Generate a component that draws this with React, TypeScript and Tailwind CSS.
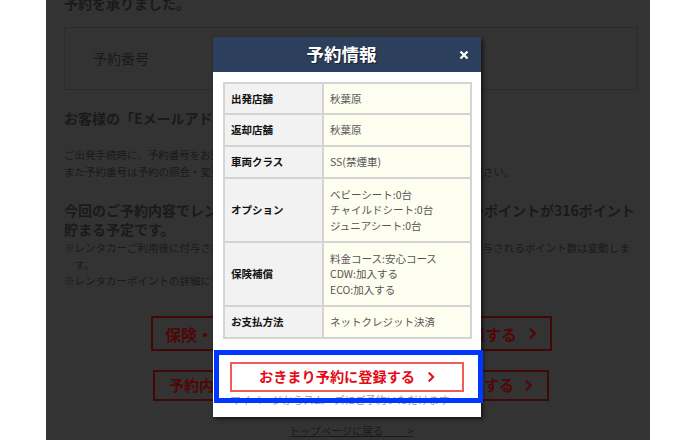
import React from 'react';

type Row = { label: string; values: string[]; height: string };

const rows: Row[] = [
  { label: '出発店舗', values: ['秋葉原'], height: 'h-[31px]' },
  { label: '返却店舗', values: ['秋葉原'], height: 'h-[32px]' },
  { label: '車両クラス', values: ['SS(禁煙車)'], height: 'h-[32px]' },
  { label: 'オプション', values: ['ベビーシート:0台', 'チャイルドシート:0台', 'ジュニアシート:0台'], height: 'h-[64px]' },
  { label: '保険補償', values: ['料金コース:安心コース', 'CDW:加入する', 'ECO:加入する'], height: 'h-[64px]' },
  { label: 'お支払方法', values: ['ネットクレジット決済'], height: 'h-[32px]' },
];

const Chevron = ({ className }: { className: string }) => (
  <svg viewBox="0 0 8 12" className={className} fill="none">
    <polyline points="1.5,1.5 6,6 1.5,10.5" stroke="currentColor" strokeWidth="2.4" strokeLinecap="square" />
  </svg>
);

// 背景のページ（オーバーレイで暗くなっている）
const BackgroundPage = () => (
  <div className="mx-[46px] h-full bg-[#333333] pl-[18px] pr-[12px] text-[#1a1a1a] overflow-hidden">
    <h1 className="-mt-[7px] text-[14px] leading-[20px] font-bold">予約を承りました。</h1>

    <div className="mt-[14px] h-[63px] border border-[#2b2b2b] flex items-center pl-[28px]">
      <span className="text-[14px]">予約番号</span>
    </div>

    <p className="mt-[18px] text-[14px] leading-[20px] font-bold">お客様の「Eメールアドレス」に確認メールを送信しました。</p>

    <div className="mt-[19px] text-[10.5px] leading-[16.6px] whitespace-nowrap">
      <p>ご出発手続時に、予約番号をお知らせください。</p>
      <p>また予約番号は予約の照会・変更・キャンセル時に必要になるので、大切に保管してください。</p>
    </div>

    <div className="mt-[21px] text-[14px] leading-[18.4px] font-bold whitespace-nowrap">
      <p>今回のご予約内容でレンタカーをご利用いただいた場合レンタカーポイントが316ポイント</p>
      <p>貯まる予定です。</p>
    </div>

    <div className="mt-[2px] text-[10.5px] leading-[16.7px] whitespace-nowrap">
      <p>※レンタカーご利用後に付与されるポイントは、ご利用内容の変更等によって、実際に付与されるポイント数は変動しま</p>
      <p className="pl-[10.5px]">す。</p>
      <p>※レンタカーポイントの詳細についてはこちらをご確認ください。</p>
    </div>

    <div className="mt-[26px] flex flex-col items-center">
      <div className="w-[401px] h-[35px] border-2 border-[#420808] flex items-center justify-center gap-[12px] text-[#4e0808]">
        <span className="text-[16px] font-bold whitespace-nowrap text-[#4e0808]">保険・オプションを含めおきまり予約に登録する</span>
        <Chevron className="w-[8px] h-[11px]" />
      </div>
      <div className="mt-[19px] w-[396px] h-[31px] border-2 border-[#420808] flex items-center justify-center gap-[11px] text-[#4e0808]">
        <span className="text-[15px] font-bold whitespace-nowrap text-[#4e0808]">予約内容を変えずそのままおきまり予約に登録する</span>
        <Chevron className="w-[8px] h-[11px]" />
      </div>
      <p className="mt-[22px] text-[10.5px] leading-[16px] underline whitespace-pre">トップページに戻る{'\u3000\u3000 >'}</p>
    </div>
  </div>
);

const ReservationModal = () => (
  <div className="absolute left-[213px] top-[37px] w-[268px] bg-white shadow-[2px_2px_4px_rgba(0,0,0,0.6)]">
    <div className="relative h-[35px] bg-[#2c3f5c] flex items-center justify-center pr-[11px]">
      <h2 className="text-white text-[17.5px] font-bold [text-shadow:1px_1px_1px_rgba(0,0,0,0.5)]">予約情報</h2>
      <svg viewBox="0 0 10 10" className="absolute right-[12px] top-[13px] w-[10px] h-[10px]">
        <path d="M1.5 1.5 L8.5 8.5 M8.5 1.5 L1.5 8.5" stroke="white" strokeWidth="2.3" />
      </svg>
    </div>

    <div className="pt-[10px] px-[10px] pb-[10px]">
      <table className="w-[249px] border-collapse table-fixed text-[10.5px]">
        <tbody>
          {rows.map((row) => (
            <tr key={row.label} className={row.height}>
              <th className="w-[99px] border-2 border-[#d4d4d4] bg-[#f2f2f2] pl-[6px] text-left font-bold text-[#111]">
                {row.label}
              </th>
              <td className="border-2 border-[#d4d4d4] bg-[#fefef0] pl-[6px] text-[#555] leading-[15.6px]">
                {row.values.map((v) => (
                  <div key={v}>{v}</div>
                ))}
              </td>
            </tr>
          ))}
        </tbody>
      </table>

      <div className="mt-[23px] mx-[7px] h-[30px] border-2 border-[#f25a5a] flex items-center justify-center gap-[13px] text-[#e60a14]">
        <span className="text-[14.2px] font-bold">おきまり予約に登録する</span>
        <Chevron className="w-[7px] h-[10px]" />
      </div>
      <p className="mt-[1px] pl-[7px] text-[10.5px] leading-[14px] text-[#9a9a9a] whitespace-nowrap">
        マイページからスムーズにご予約いただけます
      </p>
    </div>
  </div>
);

export default function App() {
  return (
    <div className="relative w-[696px] h-[440px] bg-white overflow-hidden font-['Noto_Sans_CJK_JP','Noto_Sans',sans-serif]">
      <BackgroundPage />
      <ReservationModal />
      {/* 注目枠（青） */}
      <div className="absolute left-[214px] top-[350px] w-[269px] h-[53px] border-[5px] border-[#0038ff]" />
    </div>
  );
}
